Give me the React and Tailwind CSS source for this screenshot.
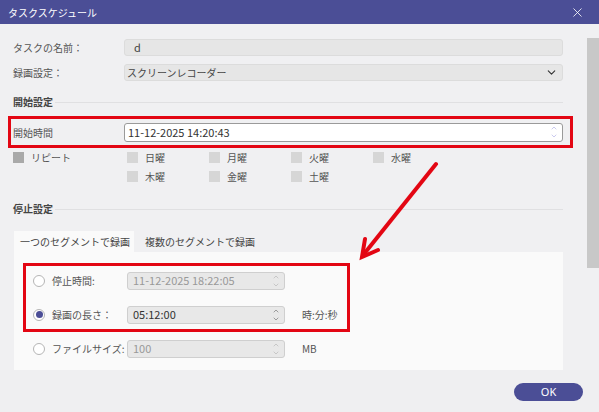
import React from 'react';
import { X, ChevronDown, ChevronUp } from 'lucide-react';

const font = { fontFamily: '"Noto Sans CJK JP", "Noto Sans", sans-serif' };

/* 上下の小さいスピナー */
const Spin = ({ color = 'text-[#888]' }) => (
  <div className={`flex flex-col items-center leading-none ${color}`}>
    <ChevronUp size={8} strokeWidth={1.6} />
    <ChevronDown size={8} strokeWidth={1.6} />
  </div>
);

const Check = ({ label, dark }) => (
  <div className="flex items-center w-[82px] h-[19px]">
    <span className={`w-[11px] h-[11px] ${dark ? 'bg-[#a9a9a9]' : 'bg-[#d6d6d6]'}`} />
    <span className="ml-[7px] text-[10px] text-[#555] whitespace-nowrap">{label}</span>
  </div>
);

const Radio = ({ checked }) => (
  <span className="w-[12px] h-[12px] shrink-0 rounded-full border border-[#b5b5b5] bg-white flex items-center justify-center">
    {checked && <span className="w-[7px] h-[7px] rounded-full bg-[#4b4e96]" />}
  </span>
);

const RadioRow = ({ checked, label, value, unit }) => (
  <div className="flex items-center h-[19px]">
    <Radio checked={checked} />
    <span className="ml-[7px] w-[75px] text-[10px] text-[#555] whitespace-nowrap">{label}</span>
    <div className="w-[158px] h-[18px] rounded-[3px] border border-[#cfcfcf] bg-[#e8e8e8] flex items-center justify-between pl-[5px] pr-[4px]">
      <span className={`text-[11px] ${checked ? 'text-[#333]' : 'text-[#999]'}`}>{value}</span>
      <Spin color={checked ? 'text-[#555]' : 'text-[#aaa]'} />
    </div>
    {unit && <span className="ml-[17px] text-[10px] text-[#555] whitespace-nowrap">{unit}</span>}
  </div>
);

const Section = ({ title }) => (
  <div className="flex items-center h-[19px]">
    <span className="text-[10px] font-bold text-[#444] whitespace-nowrap">{title}</span>
    <div className="flex-1 h-px bg-[#e0e0e2] ml-[2px] mt-[2px]" />
  </div>
);

export default function App() {
  return (
    <div className="relative w-[599px] h-[412px] bg-[#f0f0f2] overflow-hidden" style={font}>
      {/* タイトルバー */}
      <div className="h-[24px] bg-[#4b4e96] flex items-center justify-between pl-[8px] pr-[14px]">
        <span className="text-white text-[10px]">タスクスケジュール</span>
        <X size={15} strokeWidth={1.3} className="text-white" />
      </div>

      <div className="flex h-[346px]">
        <div className="flex-1 overflow-hidden">
          <div className="w-[563px] pl-[13px] pt-[15px]">
            <div className="flex items-center h-[17px]">
              <span className="w-[111px] text-[10px] text-[#555] whitespace-nowrap">タスクの名前：</span>
              <div className="flex-1 h-[17px] bg-[#e6e6e6] border border-[#dcdcdc] rounded-[3px] pl-[9px] text-[11px] text-[#444] leading-[15px]">d</div>
            </div>
            <div className="flex items-center h-[17px] mt-[8px]">
              <span className="w-[111px] text-[10px] text-[#555] whitespace-nowrap">録画設定：</span>
              <div className="flex-1 h-[17px] bg-[#e6e6e6] border border-[#dcdcdc] rounded-[3px] pl-[2px] pr-[4px] flex items-center justify-between">
                <span className="text-[10px] text-[#444] whitespace-nowrap">スクリーンレコーダー</span>
                <ChevronDown size={13} strokeWidth={2} className="text-[#333]" />
              </div>
            </div>

            <div className="mt-[11px]"><Section title="開始設定" /></div>

            <div className="mt-[5px] -ml-[5px] -mr-[10px] border-[3px] border-[#e30613] pl-[2px] pr-[7px] h-[32px] flex items-center">
              <span className="w-[111px] text-[10px] text-[#555] whitespace-nowrap">開始時間</span>
              <div className="flex-1 h-[19px] bg-white border border-[#9a9a9a] rounded-[3px] pl-[3px] pr-[4px] flex items-center justify-between">
                <span className="text-[11px] text-[#333]">11-12-2025 14:20:43</span>
                <Spin color="text-[#9b9be0]" />
              </div>
            </div>

            <div className="flex">
              <div className="w-[114px]"><Check label="リピート" dark /></div>
              <div className="flex flex-wrap w-[340px]">
                <Check label="日曜" />
                <Check label="月曜" />
                <Check label="火曜" />
                <Check label="水曜" />
                <Check label="木曜" />
                <Check label="金曜" />
                <Check label="土曜" />
              </div>
            </div>

            <div className="mt-[13px]"><Section title="停止設定" /></div>

            <div className="mt-[13px] ml-[1px] flex h-[21px] items-end">
              <div className="w-[120px] h-[21px] bg-[#fafafa] flex items-center pl-[6px] text-[10px] text-[#444] whitespace-nowrap">一つのセグメントで録画</div>
              <div className="pl-[11px] h-[21px] flex items-center text-[10px] text-[#444] whitespace-nowrap">複数のセグメントで録画</div>
            </div>
            <div className="ml-[1px] bg-[#fafafa] h-[120px] pt-[11px] pl-[9px]">
              <div className="w-[327px] border-[3px] border-[#e30613] pl-[7px] pt-[5px] pb-[5px] flex flex-col gap-[15px]">
                <RadioRow label="停止時間:" value="11-12-2025 18:22:05" />
                <RadioRow checked label="録画の長さ：" value="05:12:00" unit="時:分:秒" />
              </div>
              <div className="pl-[10px] mt-[7px]">
                <RadioRow label="ファイルサイズ:" value="100" unit="MB" />
              </div>
            </div>
          </div>
        </div>
        {/* スクロールバー */}
        <div className="w-[12px] pt-[14px]">
          <div className="h-[230px] bg-[#c8c8c8]" />
        </div>
      </div>

      {/* フッター */}
      <div className="absolute left-0 right-0 bottom-0 h-[42px] bg-[#efeff1] flex items-start justify-end pr-[16px] pt-[13px]">
        <button className="w-[69px] h-[18px] rounded-full bg-[#4b4e96] text-white text-[11px] leading-[18px]" style={{ fontFamily: '"Noto Sans", sans-serif' }}>OK</button>
      </div>

      {/* 赤い矢印 */}
      <svg className="absolute left-0 top-0 pointer-events-none" width="599" height="412">
        <g stroke="#e30613" strokeWidth="4" strokeLinecap="round" fill="none">
          <line x1="436" y1="164" x2="364" y2="254" />
          <polyline points="365,239 362,257 378,250" strokeLinejoin="miter" />
        </g>
      </svg>
    </div>
  );
}
